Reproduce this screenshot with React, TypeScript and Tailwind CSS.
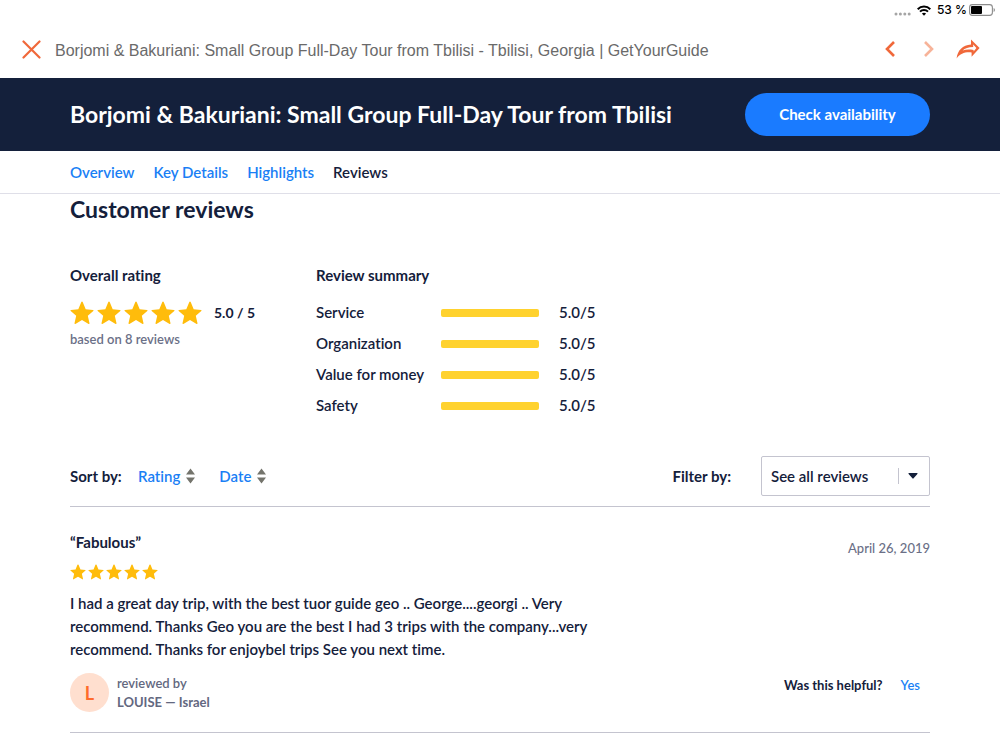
import type { ReactNode } from "react";

const TABS = ["Overview", "Key Details", "Highlights", "Reviews"];

const SUMMARY = [
  { label: "Service", score: 5 },
  { label: "Organization", score: 5 },
  { label: "Value for money", score: 5 },
  { label: "Safety", score: 5 },
];

const SORTS = ["Rating", "Date"];

function Star({ className }: { className: string }) {
  return (
    <svg viewBox="0 0 24 24" className={className} fill="#ffbc0b" aria-hidden="true">
      <path d="M12 0.6 Q12.5 0.6 12.8 1.3 L15.7 8.2 L23 8.9 Q24 9.1 23.3 9.9 L17.8 14.8 L19.5 22.3 Q19.5 23.4 18.6 23 L12 19.1 L5.4 23 Q4.5 23.4 4.5 22.3 L6.2 14.8 L0.7 9.9 Q0 9.1 1 8.9 L8.3 8.2 L11.2 1.3 Q11.5 0.6 12 0.6 Z" />
    </svg>
  );
}

function Stars({ className, star }: { className: string; star: string }) {
  return (
    <div className={className} role="img" aria-label="5 out of 5 stars">
      {[0, 1, 2, 3, 4].map((i) => (
        <Star key={i} className={star} />
      ))}
    </div>
  );
}

function StatusBar() {
  return (
    <div className="flex h-5 items-center justify-end pr-1 font-['Inter',sans-serif] text-xs font-medium text-black">
      <svg viewBox="0 0 18 6" className="mt-2 mr-[5px] h-[6px] w-[18px]" fill="#a5a5a5" aria-hidden="true">
        <circle cx="2" cy="3" r="1.5" />
        <circle cx="6.4" cy="3" r="1.5" />
        <circle cx="10.8" cy="3" r="1.5" />
        <circle cx="15.2" cy="3" r="1.5" />
      </svg>
      <svg viewBox="0 0 14 11" className="mr-[6px] h-[11px] w-[14px]" fill="none" stroke="#000" strokeWidth="2" aria-hidden="true">
        <path d="M0.7 4.2 C4.2 0.6 9.8 0.6 13.3 4.2" />
        <path d="M3 6.6 C5.2 4.4 8.8 4.4 11 6.6" />
        <path d="M7 10.8 L4.9 8.6 C6.1 7.5 7.9 7.5 9.1 8.6 Z" fill="#000" stroke="none" />
      </svg>
      <span>53 %</span>
      <svg viewBox="0 0 27 12" className="ml-[2px] h-3 w-[27px]" aria-hidden="true">
        <rect x="0.6" y="0.6" width="22.8" height="10.8" rx="2.8" fill="#fff" stroke="#8c8c8c" strokeWidth="1.1" />
        <rect x="2" y="2" width="11" height="8" rx="1" fill="#000" />
        <path d="M24.6 4 C26.4 4.6 26.4 7.4 24.6 8 Z" fill="#8c8c8c" />
      </svg>
    </div>
  );
}

function IconButton({ label, disabled, children }: { label: string; disabled?: boolean; children: ReactNode }) {
  return (
    <button type="button" aria-label={label} disabled={disabled} className="flex items-center text-[#f0683a] disabled:text-[#f7b399]">
      {children}
    </button>
  );
}

function BrowserBar() {
  return (
    <div className="flex h-[58px] items-center pr-5 pl-[22px]">
      <IconButton label="Close">
        <svg viewBox="0 0 19 19" className="h-[19px] w-[19px]" fill="none" stroke="currentColor" strokeWidth="2.2" strokeLinecap="round">
          <path d="M1.5 1.5 L17.5 17.5 M17.5 1.5 L1.5 17.5" />
        </svg>
      </IconButton>
      <p className="ml-[14px] min-w-0 flex-1 truncate pt-1 font-['Liberation_Sans',sans-serif] text-base text-[#6a6a6a]">
        Borjomi &amp; Bakuriani: Small Group Full-Day Tour from Tbilisi - Tbilisi, Georgia | GetYourGuide
      </p>
      <div className="flex items-center">
        <IconButton label="Back">
          <svg viewBox="0 0 10 16" className="h-4 w-[10px]" fill="none" stroke="currentColor" strokeWidth="2.6">
            <path d="M9 1 L2 8 L9 15" />
          </svg>
        </IconButton>
        <div className="w-[29px]" />
        <IconButton label="Forward" disabled>
          <svg viewBox="0 0 10 16" className="h-4 w-[10px]" fill="none" stroke="currentColor" strokeWidth="2.6">
            <path d="M1 1 L8 8 L1 15" />
          </svg>
        </IconButton>
        <div className="w-[22px]" />
        <IconButton label="Share">
          <svg viewBox="0 0 24 20" className="h-5 w-6" fill="currentColor">
            <path
              fillRule="evenodd"
              d="M15 0.4 L23.6 9 L15.6 17.8 V13.4 C9 12.8 4.6 14.2 0.6 19.4 C1.6 11.6 6.6 6 15 5.6 Z M17.2 5.6 V8 C12.4 8 9 9.2 6.6 11.5 C9.8 10.3 13 10.2 17.6 10.9 V12.4 L20.4 9.1 Z"
            />
          </svg>
        </IconButton>
      </div>
    </div>
  );
}

function SortIcon() {
  return (
    <svg viewBox="0 0 9 16" className="h-4 w-[9px]" fill="#74746c" aria-hidden="true">
      <path d="M4.5 0.5 L9 6.5 H0 Z M4.5 15.5 L9 9.5 H0 Z" />
    </svg>
  );
}

function Summary() {
  return (
    <section>
      <h3 className="text-[15px] leading-5 font-bold">Review summary</h3>
      <dl className="mt-3">
        {SUMMARY.map((row) => (
          <div key={row.label} className="flex h-[31px] items-center text-[15px] font-semibold">
            <dt className="w-[125px]">{row.label}</dt>
            <dd className="flex items-center">
              <div className="h-2 w-[98px] overflow-hidden rounded-xs bg-gray-200">
                <div className="h-full bg-[#ffd22e]" style={{ width: `${(row.score / 5) * 100}%` }} />
              </div>
              <span className="ml-5">{row.score.toFixed(1)}/5</span>
            </dd>
          </div>
        ))}
      </dl>
    </section>
  );
}

function Review() {
  return (
    <article className="border-b border-[#c4c4cf] pt-[23px] pb-5">
      <div className="flex items-start justify-between">
        <h3 className="text-[15px] leading-6 font-bold">“Fabulous”</h3>
        <time dateTime="2019-04-26" className="mt-2 text-[13px] leading-5 font-medium text-[#6b7087]">
          April 26, 2019
        </time>
      </div>
      <Stars className="mt-[6px] flex gap-[2px]" star="h-4 w-4" />
      <p className="mt-3 max-w-[545px] text-[15px] leading-[23px] font-semibold">
        I had a great day trip, with the best tuor guide geo .. George....georgi .. Very recommend. Thanks Geo you are the best I had 3 trips with the company...very recommend. Thanks for
        enjoybel trips See you next time.
      </p>
      <div className="mt-3 flex items-center justify-between">
        <div className="flex items-center gap-2">
          <div className="flex h-[39px] w-[39px] items-center justify-center rounded-full bg-[#ffdfcf] text-lg font-bold text-[#ff6b2c]">L</div>
          <div className="text-[13px] leading-[19px] text-[#63687f]">
            <p className="font-semibold">reviewed by</p>
            <p className="font-bold">LOUISE — Israel</p>
          </div>
        </div>
        <div className="mb-4 flex items-center gap-[18px] pr-[10px] text-[13px] leading-5">
          <span className="font-bold">Was this helpful?</span>
          <button type="button" className="font-semibold text-[#1a7ff5]">
            Yes
          </button>
        </div>
      </div>
    </article>
  );
}

export default function App() {
  return (
    <div className="min-h-screen bg-white font-['Lato',sans-serif] text-[#14203b] [font-variant-ligatures:none]">
      <StatusBar />
      <BrowserBar />

      <header className="bg-[#14203b]">
        <div className="flex h-[73px] items-center justify-between px-[70px]">
          <h1 className="text-[23px] font-bold text-white">Borjomi &amp; Bakuriani: Small Group Full-Day Tour from Tbilisi</h1>
          <button type="button" className="h-[43px] w-[185px] shrink-0 rounded-full bg-[#1a7bff] text-[15px] font-bold text-white">
            Check availability
          </button>
        </div>
      </header>

      <nav className="flex h-[43px] items-center gap-[19px] border-b border-[#dfdfe8] px-[70px] text-[15px] font-semibold">
        {TABS.map((tab) => (
          <a key={tab} href={`#${tab.toLowerCase().replace(" ", "-")}`} className={tab === "Reviews" ? "text-[#14203b]" : "text-[#1a7ff5]"}>
            {tab}
          </a>
        ))}
      </nav>

      <main id="reviews" className="px-[70px]">
        <h2 className="text-[23px] leading-[30px] font-bold">Customer reviews</h2>

        <div className="mt-[41px] flex">
          <section className="w-[246px]">
            <h3 className="text-[15px] leading-5 font-bold">Overall rating</h3>
            <div className="mt-4 flex items-center">
              <Stars className="flex gap-[3px]" star="h-6 w-6" />
              <span className="ml-3 text-sm font-bold">5.0 / 5</span>
            </div>
            <p className="mt-1 text-[13px] leading-5 font-semibold text-[#6b7087]">based on 8 reviews</p>
          </section>
          <Summary />
        </div>

        <div className="mt-[35px] flex items-center justify-between border-b border-[#c4c4cf] pb-[10px]">
          <div className="flex items-center text-[15px]">
            <span className="w-[68px] font-bold">Sort by:</span>
            <div className="flex items-center gap-6">
              {SORTS.map((sort) => (
                <button key={sort} type="button" className="flex items-center gap-[6px] font-semibold text-[#1a7ff5]">
                  {sort}
                  <SortIcon />
                </button>
              ))}
            </div>
          </div>
          <div className="flex items-center gap-[30px]">
            <label htmlFor="filter" className="text-[15px] font-bold">
              Filter by:
            </label>
            <div className="relative">
              <select id="filter" className="h-10 w-[169px] appearance-none rounded-xs border border-[#c4c4cf] bg-white pl-[9px] text-[15px] font-semibold">
                <option>See all reviews</option>
              </select>
              <span className="pointer-events-none absolute top-3 right-3 flex h-4 items-center border-l border-[#c4c4cf] pl-[9px]">
                <svg viewBox="0 0 10 6" className="h-[6px] w-[10px]" fill="#14203b" aria-hidden="true">
                  <path d="M1 0 H9 Q10 0.2 9.4 1 L5.6 5.3 Q5 6 4.4 5.3 L0.6 1 Q0 0.2 1 0 Z" />
                </svg>
              </span>
            </div>
          </div>
        </div>

        <Review />
      </main>
    </div>
  );
}
